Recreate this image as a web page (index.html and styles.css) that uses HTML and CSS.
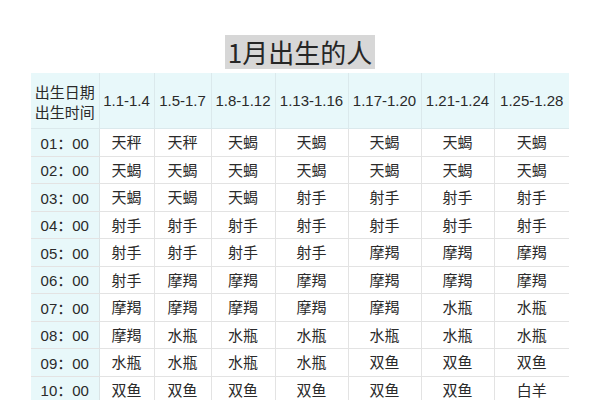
FILE: index.html
```html
<!DOCTYPE html>
<html lang="zh">
<head>
<meta charset="utf-8">
<link rel="stylesheet" href="styles.css">
</head>
<body>
<div class="page">
  <div class="title-row"><h1 class="title">1月出生的人</h1></div>
  <table class="chart">
    <colgroup>
      <col class="c0"><col class="c1"><col class="c2"><col class="c3"><col class="c4"><col class="c5"><col class="c6"><col class="c7">
    </colgroup>
    <thead>
      <tr>
        <th class="corner">出生日期<br>出生时间</th>
        <th>1.1-1.4</th><th>1.5-1.7</th><th>1.8-1.12</th><th>1.13-1.16</th><th>1.17-1.20</th><th>1.21-1.24</th><th>1.25-1.28</th>
      </tr>
    </thead>
    <tbody>
      <tr><th>01：00</th><td>天秤</td><td>天秤</td><td>天蝎</td><td>天蝎</td><td>天蝎</td><td>天蝎</td><td>天蝎</td></tr>
      <tr><th>02：00</th><td>天蝎</td><td>天蝎</td><td>天蝎</td><td>天蝎</td><td>天蝎</td><td>天蝎</td><td>天蝎</td></tr>
      <tr><th>03：00</th><td>天蝎</td><td>天蝎</td><td>天蝎</td><td>射手</td><td>射手</td><td>射手</td><td>射手</td></tr>
      <tr><th>04：00</th><td>射手</td><td>射手</td><td>射手</td><td>射手</td><td>射手</td><td>射手</td><td>射手</td></tr>
      <tr><th>05：00</th><td>射手</td><td>射手</td><td>射手</td><td>射手</td><td>摩羯</td><td>摩羯</td><td>摩羯</td></tr>
      <tr><th>06：00</th><td>射手</td><td>摩羯</td><td>摩羯</td><td>摩羯</td><td>摩羯</td><td>摩羯</td><td>摩羯</td></tr>
      <tr><th>07：00</th><td>摩羯</td><td>摩羯</td><td>摩羯</td><td>摩羯</td><td>摩羯</td><td>水瓶</td><td>水瓶</td></tr>
      <tr><th>08：00</th><td>摩羯</td><td>水瓶</td><td>水瓶</td><td>水瓶</td><td>水瓶</td><td>水瓶</td><td>水瓶</td></tr>
      <tr><th>09：00</th><td>水瓶</td><td>水瓶</td><td>水瓶</td><td>水瓶</td><td>双鱼</td><td>双鱼</td><td>双鱼</td></tr>
      <tr><th>10：00</th><td>双鱼</td><td>双鱼</td><td>双鱼</td><td>双鱼</td><td>双鱼</td><td>双鱼</td><td>白羊</td></tr>
    </tbody>
  </table>
</div>
</body>
</html>
```

FILE: styles.css
```css
html, body {
  margin: 0;
  padding: 0;
  background: #ffffff;
}
body {
  font-family: "Noto Sans CJK SC", "Noto Sans", sans-serif;
  color: #2a2a2a;
  overflow: hidden;
}
.page {
  padding: 35px 0 0 31px;
}
.title-row {
  width: 538px;
  display: flex;
  justify-content: center;
}
.title {
  margin: 0;
  background: #d7d7d7;
  font-size: 26px;
  font-weight: 400;
  line-height: 34px;
  height: 34px;
  padding: 0 3px;
  color: #262626;
}
.chart {
  margin-top: 4px;
  border-collapse: collapse;
  table-layout: fixed;
  width: 538px;
}
.c0 { width: 68px; }
.c1 { width: 55px; }
.c2 { width: 57px; }
.c3 { width: 64px; }
.c4 { width: 73px; }
.c5 { width: 73px; }
.c6 { width: 73px; }
.c7 { width: 75px; }
.chart th, .chart td {
  padding: 0;
  text-align: center;
  font-weight: 400;
  border: 1px solid #e3e3e3;
  white-space: nowrap;
}
.chart tr > :first-child { border-left: none; }
.chart tr > :last-child { border-right: none; }
.chart thead th {
  height: 53px;
  background: #e8f8fa;
  font-family: "Liberation Sans", "Noto Sans CJK SC", sans-serif;
  font-size: 15px;
  color: #2a2a2a;
  border-top: none;
  border-color: #dbe9ec;
}
.chart thead th.corner {
  font-family: "Noto Sans CJK SC", sans-serif;
  font-size: 15px;
  line-height: 20px;
  padding-top: 2px;
}
.chart tbody tr {
  height: 27.5px;
}
.chart tbody th {
  background: #e8f8fa;
  font-family: "Liberation Sans", "Noto Sans CJK SC", sans-serif;
  font-size: 15px;
  border-right-color: #dbe4e6;
}
.chart tbody td {
  font-size: 15px;
  line-height: 20px;
}
```
